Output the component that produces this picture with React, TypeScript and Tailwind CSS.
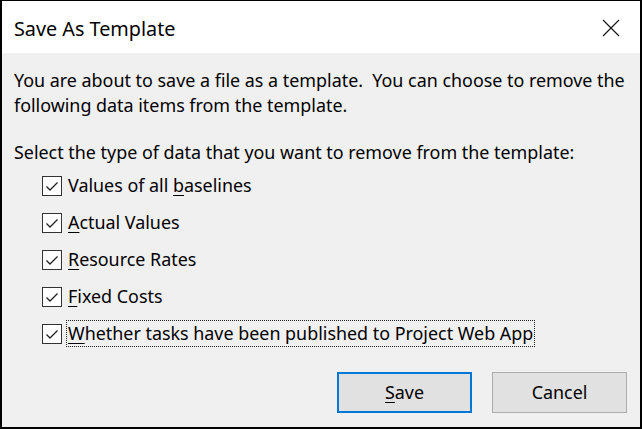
import React from "react";

const items: { pre: string; key: string; post: string; focus?: boolean }[] = [
  { pre: "Values of all ", key: "b", post: "aselines" },
  { pre: "", key: "A", post: "ctual Values" },
  { pre: "", key: "R", post: "esource Rates" },
  { pre: "", key: "F", post: "ixed Costs" },
  { pre: "", key: "W", post: "hether tasks have been published to Project Web App", focus: true },
];

function CheckBox() {
  return (
    <div className="w-[20px] h-[20px] bg-white border border-[#333333] flex items-center justify-center shrink-0">
      <svg width="16" height="16" viewBox="0 0 16 16" fill="none">
        <path d="M2.5 8.5 L6 12 L13.5 4.5" stroke="#222" strokeWidth="1.3" />
      </svg>
    </div>
  );
}

export default function App() {
  return (
    <div
      className="w-[642px] h-[429px] flex flex-col border-t border-x-2 border-b-2 border-black bg-[#f0f0f0] text-[#000] overflow-hidden"
      style={{ fontFamily: '"Noto Sans", "Open Sans", sans-serif' }}
    >
      {/* Title bar */}
      <div className="h-[52px] bg-white flex items-center justify-between pl-[12px] pr-[20px] shrink-0">
        <div className="text-[19.8px] pt-[3px]">Save As Template</div>
        <svg width="18" height="18" viewBox="0 0 18 18" className="mt-[2px]">
          <path d="M1 1 L17 17 M17 1 L1 17" stroke="#111" strokeWidth="1.1" />
        </svg>
      </div>

      {/* Body */}
      <div className="flex flex-col px-[12px] pt-[15px] text-[17.9px] leading-[25px]">
        <p className="whitespace-nowrap">
          You are about to save a file as a template.&nbsp; You can choose to remove the
          <br />
          following data items from the template.
        </p>
        <p className="mt-[22px] whitespace-nowrap">Select the type of data that you want to remove from the template:</p>
        <div className="flex flex-col pl-[28px] mt-[8px] gap-[12px]">
          {items.map((it, i) => (
            <div key={i} className="flex items-center gap-[5px] h-[25px]">
              <CheckBox />
              <span
                className={`px-[1px] whitespace-nowrap ${it.focus ? "outline outline-1 outline-dotted outline-[#222] outline-offset-0" : ""}`}
              >
                {it.pre}
                <span className="underline underline-offset-[3px]">{it.key}</span>
                {it.post}
              </span>
            </div>
          ))}
        </div>
      </div>

      {/* Buttons */}
      <div className="flex justify-end gap-[20px] pr-[13px] mt-auto mb-[14px]">
        <button className="w-[135px] h-[41px] bg-[#e1e1e1] border-2 border-[#0078d7] text-[17.9px]">
          <span className="underline underline-offset-[3px]">S</span>ave
        </button>
        <button className="w-[135px] h-[41px] bg-[#e1e1e1] border border-[#adadad] text-[17.9px]">Cancel</button>
      </div>
    </div>
  );
}
